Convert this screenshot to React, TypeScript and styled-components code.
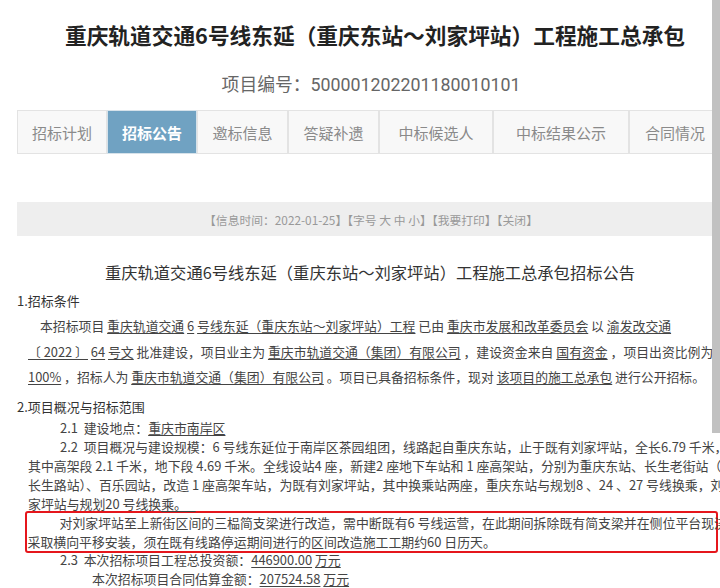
import styled, { createGlobalStyle } from 'styled-components'

const GlobalStyle = createGlobalStyle`
  html {
    overflow-x: hidden;
  }
  body {
    margin: 0;
    background: #ffffff;
    font-family: 'Noto Sans CJK SC', 'Noto Sans', sans-serif;
    color: #333;
  }
`

const tabs = [
  { label: '招标计划', width: 90 },
  { label: '招标公告', width: 90, active: true },
  { label: '邀标信息', width: 91 },
  { label: '答疑补遗', width: 91 },
  { label: '中标候选人', width: 114 },
  { label: '中标结果公示', width: 136 },
  { label: '合同情况', width: 92 },
]

export default function App() {
  return (
    <>
      <GlobalStyle />
      <Page>
        <Container>
          <Title>重庆轨道交通6号线东延（重庆东站～刘家坪站）工程施工总承包</Title>
          <ProjectNo>项目编号：500001202201180010101</ProjectNo>
          <TabBar>
            {tabs.map((t) => (
              <Tab key={t.label} $width={t.width} $active={t.active}>
                {t.label}
              </Tab>
            ))}
          </TabBar>
          <InfoBar>【信息时间：2022-01-25】【字号 大 中 小】【我要打印】【关闭】</InfoBar>
          <NoticeTitle>重庆轨道交通6号线东延（重庆东站～刘家坪站）工程施工总承包招标公告</NoticeTitle>

          <SectionHead>1.招标条件</SectionHead>
          <Para>
            <Line $indent={12}>
              本招标项目 <U>重庆轨道交通</U> <U>6</U> <U>号线东延（重庆东站～刘家坪站）工程</U> 已由{' '}
              <U>重庆市发展和改革委员会</U> 以 <U>渝发改交通</U>
            </Line>
            <Line>
              <U>〔 2022 〕</U> <U>64</U> <U>号文</U> 批准建设，项目业主为{' '}
              <U>重庆市轨道交通（集团）有限公司</U> ，建设资金来自 <U>国有资金</U> ，项目出资比例为
            </Line>
            <Line>
              <U>100%</U> ，招标人为 <U>重庆市轨道交通（集团）有限公司</U> 。项目已具备招标条件，现对{' '}
              <U>该项目的施工总承包</U> 进行公开招标。
            </Line>
          </Para>

          <SectionHead $gap={5}>2.项目概况与招标范围</SectionHead>
          <Body>
            <Row $indent={32}>
              2.1&nbsp;&nbsp;建设地点：<U>重庆市南岸区</U>
            </Row>
            <Row $indent={32}>
              2.2&nbsp;&nbsp;项目概况与建设规模：6 号线东延位于南岸区茶园组团，线路起自重庆东站，止于既有刘家坪站，全长6.79 千米，
            </Row>
            <Row>
              其中高架段 2.1 千米，地下段 4.69 千米。全线设站4 座，新建2 座地下车站和 1 座高架站，分别为重庆东站、长生老街站（
            </Row>
            <Row>
              长生路站）、百乐园站，改造 1 座高架车站，为既有刘家坪站，其中换乘站两座，重庆东站与规划8 、24 、27 号线换乘，刘
            </Row>
            <Row>
              家坪站与规划20 号线换<U>乘。&nbsp;&nbsp;&nbsp;</U>
            </Row>
            <Highlight>
              <BoxRow $indent={32}>
                对刘家坪站至上新街区间的三榀简支梁进行改造，需中断既有6 号线运营，在此期间拆除既有简支梁并在侧位平台现浇，
              </BoxRow>
              <BoxRow>采取横向平移安装，须在既有线路停运期间进行的区间改造施工工期约60 日历天。</BoxRow>
            </Highlight>
            <Row $indent={32}>
              2.3&nbsp;&nbsp;本次招标项目工程总投资额：<U>446900.00</U> <U>万元</U>
            </Row>
            <Row $indent={64}>
              本次招标项目合同估算金额：<U>207524.58</U> <U>万元</U>
            </Row>
          </Body>
        </Container>
      </Page>
      <ScrollThumb />
    </>
  )
}

const Page = styled.div`
  width: 100%;
  overflow: hidden;
`

const Container = styled.div`
  width: 716px;
  margin-left: 17px;
`

const Title = styled.h1`
  margin: 0;
  padding-top: 19px;
  height: 40px;
  font-size: 21.7px;
  font-weight: 700;
  line-height: 32px;
  color: #222;
  text-align: center;
  white-space: nowrap;
`

const ProjectNo = styled.div`
  margin-top: 13px;
  height: 38px;
  box-sizing: border-box;
  padding-right: 8px;
  font-family: Roboto, 'Noto Sans CJK SC', sans-serif;
  font-size: 17.8px;
  line-height: 26px;
  color: #666;
  text-align: center;
`

const TabBar = styled.div`
  display: flex;
  height: 44px;
`

const Tab = styled.div<{ $width: number; $active?: boolean }>`
  flex: 0 0 ${(p) => p.$width}px;
  box-sizing: border-box;
  display: flex;
  align-items: center;
  justify-content: center;
  border: 1px solid ${(p) => (p.$active ? '#d6e2ea' : '#e3e3e3')};
  background: ${(p) => (p.$active ? '#70a2c2' : '#f8f8f8')};
  color: ${(p) => (p.$active ? '#ffffff' : '#8a8a8a')};
  font-size: 15px;
  font-weight: ${(p) => (p.$active ? 700 : 400)};
`

const InfoBar = styled.div`
  margin-top: 48px;
  width: 740px;
  height: 34px;
  box-sizing: border-box;
  padding-right: 32px;
  background: #eeeeee;
  display: flex;
  align-items: center;
  justify-content: center;
  font-size: 11.8px;
  color: #999;
  white-space: nowrap;
`

const NoticeTitle = styled.h2`
  margin: 23px 0 0;
  padding-right: 10px;
  font-size: 16.3px;
  font-weight: 400;
  line-height: 26px;
  color: #333;
  text-align: center;
  white-space: nowrap;
`

const SectionHead = styled.div<{ $gap?: number }>`
  margin-top: ${(p) => p.$gap ?? 4}px;
  font-size: 13px;
  line-height: 24px;
  color: #333;
`

const Para = styled.div`
  padding-left: 11px;
  font-size: 12.85px;
  line-height: 25.5px;
  color: #444;
`

const Line = styled.div<{ $indent?: number }>`
  white-space: nowrap;
  padding-left: ${(p) => p.$indent ?? 0}px;
`

const Body = styled.div`
  margin-top: -1px;
  font-size: 12.9px;
  line-height: 19px;
  color: #444;
`

const Row = styled.div<{ $indent?: number }>`
  white-space: nowrap;
  padding-left: ${(p) => 11 + (p.$indent ?? 0)}px;
`

const Highlight = styled.div`
  margin: -2px 0 -3px 8px;
  width: 693px;
  box-sizing: border-box;
  border: 2.5px solid #e5161c;
  border-radius: 3px;
`

const BoxRow = styled.div<{ $indent?: number }>`
  white-space: nowrap;
  padding-left: ${(p) => 0.5 + (p.$indent ?? 0)}px;
`

const U = styled.span`
  text-decoration: underline;
  text-underline-offset: 2px;
  color: #444;
`

const ScrollThumb = styled.div`
  position: fixed;
  z-index: 10;
  top: 0;
  left: 712px;
  width: 8px;
  height: 433px;
  background: #c1c1c1;
`
